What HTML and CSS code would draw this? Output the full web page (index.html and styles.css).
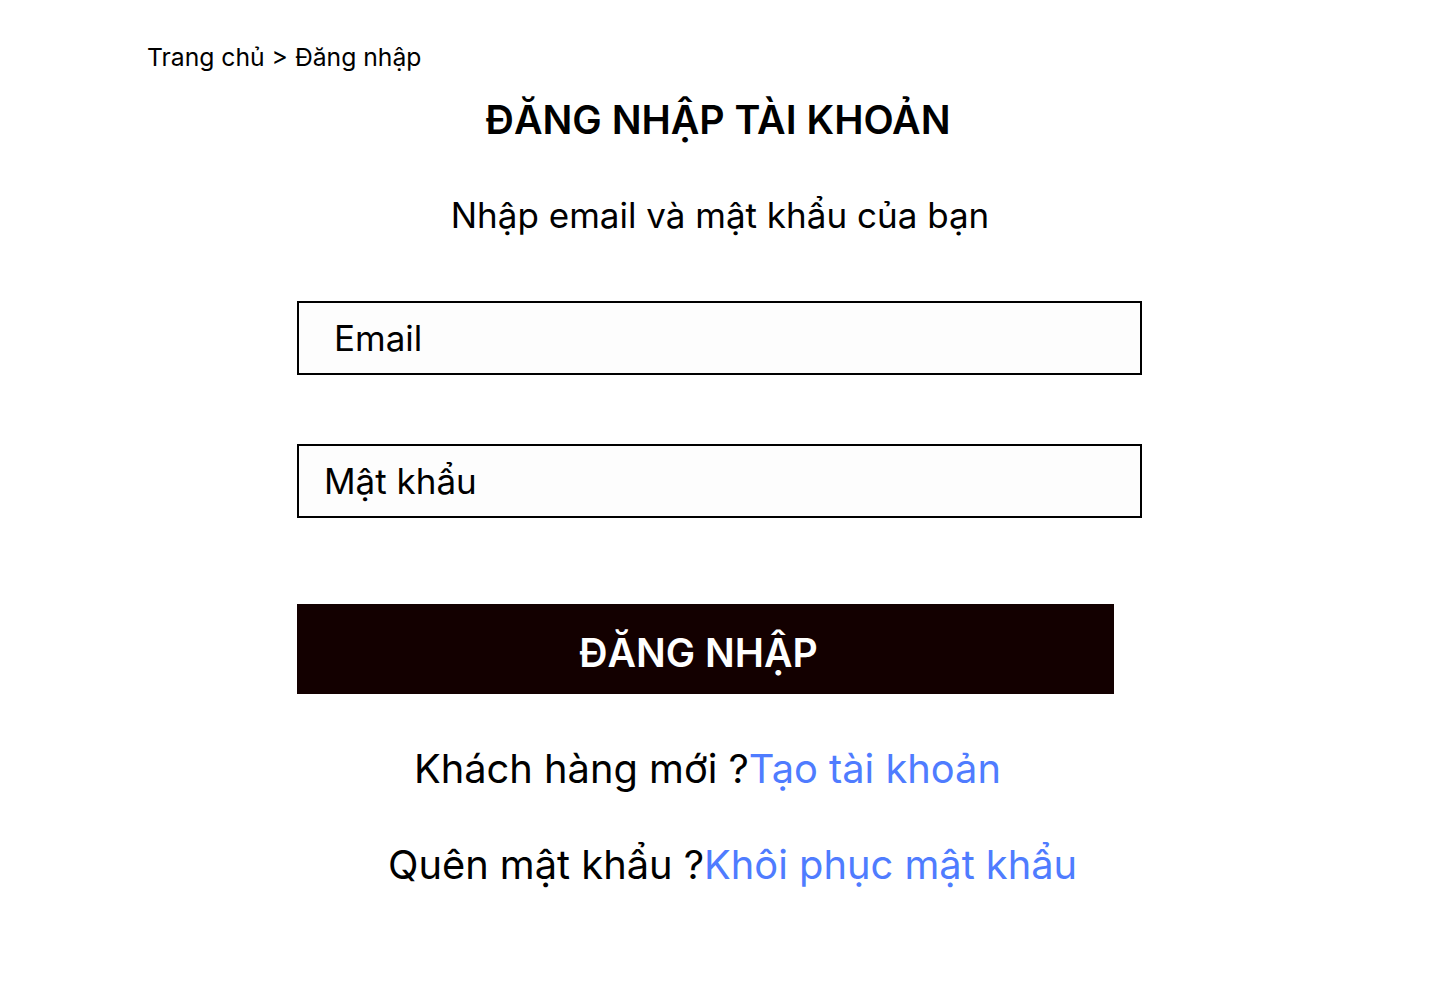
FILE: index.html
```html
<!DOCTYPE html>
<html lang="vi">
<head>
<meta charset="utf-8">
<title>Đăng nhập</title>
<link rel="stylesheet" href="styles.css">
</head>
<body>
<div class="page">
  <div class="breadcrumb">Trang chủ &gt; Đăng nhập</div>
  <h1 class="title">ĐĂNG NHẬP TÀI KHOẢN</h1>
  <p class="subtitle">Nhập email và mật khẩu của bạn</p>
  <form class="form">
    <div class="field field-email"><span>Email</span></div>
    <div class="field field-pass"><span>Mật khẩu</span></div>
    <button type="button" class="btn">ĐĂNG NHẬP</button>
  </form>
  <p class="line line-new">Khách hàng mới ?<a class="link">Tạo tài khoản</a></p>
  <p class="line line-forgot">Quên mật khẩu ?<a class="link">Khôi phục mật khẩu</a></p>
</div>
</body>
</html>
```
FILE: styles.css
```css
* { box-sizing: border-box; }
html, body { margin: 0; padding: 0; background: #fff; }
body { font-family: Inter, "Noto Sans", sans-serif; color: #000; }
.page { padding-top: 40px; }
.breadcrumb { padding-left: 147px; font-size: 24.7px; line-height: 34px; }
.title { margin: 16px 0 0; text-align: center; font-size: 39.3px; font-weight: 600; line-height: 60px; padding-right: 4px; }
.subtitle { margin: 43px 0 0; text-align: center; font-size: 35px; line-height: 44px; }
.form { margin: 64px 0 0 297px; width: 845px; display: flex; flex-direction: column; }
.field { height: 74px; border: 2px solid #000; background: #fdfdfd; display: flex; align-items: center; font-size: 35px; }
.field-email { padding-left: 35px; }
.field-pass { margin-top: 69px; padding-left: 25px; }
.btn { margin-top: 86px; width: 817px; height: 90px; border: 0; background: #130000; color: #fff; font-family: inherit; font-size: 39.2px; font-weight: 600; padding: 6px 14px 0 0; }
.line { margin: 0; font-size: 39.8px; line-height: 50px; }
.line-new { margin-top: 50px; padding-left: 414px; }
.line-forgot { margin-top: 46px; padding-left: 388px; }
.link { color: #4f7cff; }
```
